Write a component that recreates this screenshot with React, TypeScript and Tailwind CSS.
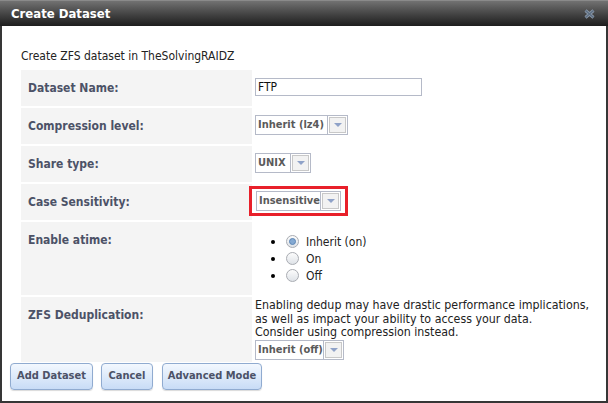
import React from "react";

const FONT = "font-['DejaVu_Sans_Condensed','DejaVu_Sans',sans-serif]";

function Select({ value, width }: { value: string; width: string }) {
  return (
    <div className={`inline-flex h-[20px] border border-[#b5bac8] bg-white ${width}`}>
      <div className="flex-1 flex items-center px-[2px] text-[11px] font-bold text-[#5a5a5a] whitespace-nowrap overflow-hidden">
        {value}
      </div>
      <div className="w-[20px] shrink-0 h-full border-l border-[#b5bac8] p-[1px]">
        <div className="w-full h-full border border-[#c8c8c8] bg-[#f2f2f2] flex items-center justify-center">
          <div className="w-0 h-0 border-l-[4px] border-r-[4px] border-t-[4px] border-l-transparent border-r-transparent border-t-[#8fa2c8]" />
        </div>
      </div>
    </div>
  );
}

function Radio({ checked, label }: { checked?: boolean; label: string }) {
  return (
    <li className="flex items-center h-[17px]">
      <span className="w-[4px] h-[4px] rounded-full bg-black mr-[11px]" />
      <span className="w-[13px] h-[13px] rounded-full border border-[#a9acb2] bg-gradient-to-b from-[#fcfcfc] to-[#dfe3e8] flex items-center justify-center mr-[7px]">
        {checked && <span className="w-[7px] h-[7px] rounded-full bg-[#84a9d2] border border-[#5d86b5]" />}
      </span>
      <span className="text-[12px] text-[#222]">{label}</span>
    </li>
  );
}

function Label({ children }: { children: React.ReactNode }) {
  return (
    <div className="bg-[#f4f4f4] px-[7px] pt-[11px] pb-[11px] text-[12px] leading-[14px] font-bold text-[#4c5267]">
      {children}
    </div>
  );
}

const btn =
  "h-[27px] rounded-[4px] border border-[#90abd0] bg-gradient-to-b from-[#f3f8fe] to-[#c8dcf6] text-[11px] font-bold text-[#4c5267] shadow-[0_1px_1px_rgba(0,0,0,0.15)]";

export default function App() {
  return (
    <div className={`${FONT} w-[608px] h-[403px] bg-white border-x-2 border-b-2 border-[#363636] flex flex-col`}>
      {/* title bar */}
      <div className="h-[26px] -mx-[2px] border-t border-[#8a8a8a] bg-gradient-to-b from-[#727272] to-[#1e1e1e] flex items-center justify-between px-[11px] shrink-0">
        <span className="text-white font-bold text-[13px]">Create Dataset</span>
        <svg width="11" height="10" viewBox="0 0 11 10" className="mr-[2px]">
          <path d="M1.5 1.5 L9.5 8.5 M9.5 1.5 L1.5 8.5" stroke="#8d9bab" strokeWidth="3" />
          <path d="M1.5 1.5 L9.5 8.5 M9.5 1.5 L1.5 8.5" stroke="#5d6e82" strokeWidth="1.6" />
        </svg>
      </div>

      <div className="pl-[19px] pr-[6px] text-[12px] text-[#222]">
        <p className="mt-[22px] leading-[16px]">Create ZFS dataset in TheSolvingRAIDZ</p>

        <div className="mt-[6px] grid grid-cols-[231px_1fr] gap-x-[3px] gap-y-[2px]">
          <Label>Dataset Name:</Label>
          <div className="pt-[8px]">
            <div className="w-[167px] h-[18px] border border-[#b5bac8] flex items-center px-[2px] text-[12px] text-[#111]">FTP</div>
          </div>

          <Label>Compression level:</Label>
          <div className="pt-[7px]">
            <Select value="Inherit (lz4)" width="w-[93px]" />
          </div>

          <Label>Share type:</Label>
          <div className="pt-[7px]">
            <Select value="UNIX" width="w-[56px]" />
          </div>

          <Label>Case Sensitivity:</Label>
          <div className="flex items-start">
            <div className="mt-[2px] -ml-[6px] border-[3px] border-[#e8202a] px-[4px] py-[2px]">
              <Select value="Insensitive" width="w-[85px]" />
            </div>
          </div>

          <Label>Enable atime:</Label>
          <ul className="my-[11px] pl-[16px]">
            <Radio checked label="Inherit (on)" />
            <Radio label="On" />
            <Radio label="Off" />
          </ul>

          <Label>ZFS Deduplication:</Label>
          <div className="pt-[2px] pb-[2px]">
            <p className="leading-[13.5px] whitespace-nowrap text-[12.3px]">
              Enabling dedup may have drastic performance implications,
              <br />
              as well as impact your ability to access your data.
              <br />
              Consider using compression instead.
            </p>
            <Select value="Inherit (off)" width="w-[89px]" />
          </div>
        </div>
      </div>

      <div className="flex pl-[8px] mt-[1px]">
        <button className={`w-[83px] ${btn}`}>Add Dataset</button>
        <button className={`ml-[8px] w-[52px] ${btn}`}>Cancel</button>
        <button className={`ml-[9px] w-[100px] ${btn}`}>Advanced Mode</button>
      </div>
    </div>
  );
}
